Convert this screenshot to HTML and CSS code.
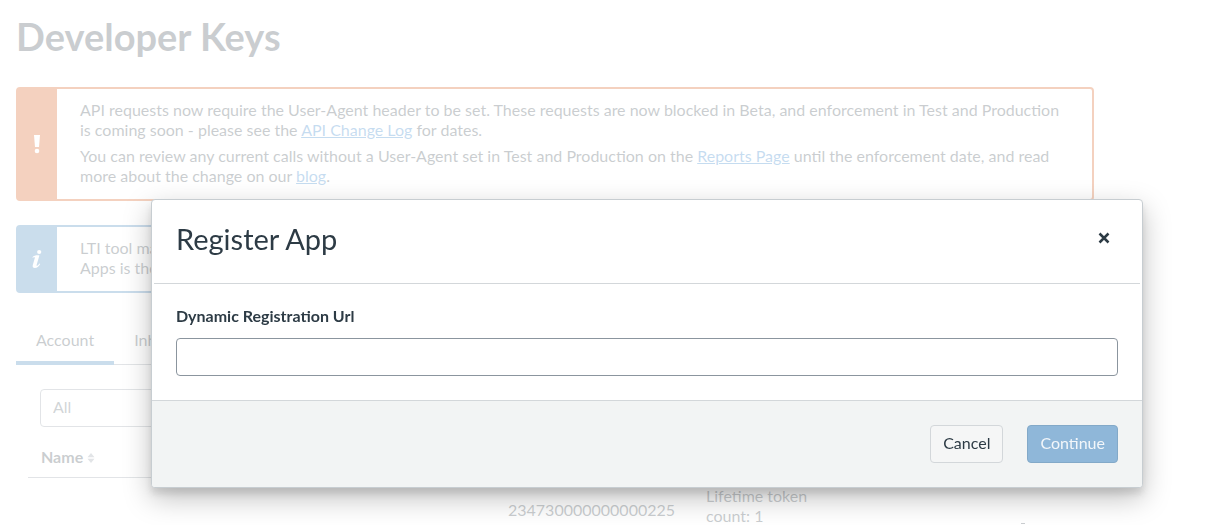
FILE: index.html
```html
<!DOCTYPE html>
<html lang="en">
<head>
    <meta charset="UTF-8">
    <meta name="viewport" content="width=device-width, initial-scale=1.0">
    <title>Developer Keys</title>
    <link rel="stylesheet" href="styles.css">
</head>
<body>
    <main class="page">
        <h1>Developer Keys</h1>

        <div class="alert alert-warning">
            <div class="alert-icon">
                <svg width="8" height="20" viewBox="0 0 8 20"><path d="M1 1h6l-1 12H2z"/><circle cx="4" cy="17" r="2.3"/></svg>
            </div>
            <div class="alert-text">
                <p>API requests now require the User-Agent header to be set. These requests are now blocked in Beta, and enforcement in Test and Production is coming soon - please see the <a href="#changelog">API Change Log</a> for dates.</p>
                <p>You can review any current calls without a User-Agent set in Test and Production on the <a href="#reports">Reports Page</a> until the enforcement date, and read more about the change on our <a href="#blog">blog</a>.</p>
            </div>
        </div>

        <div class="alert alert-info">
            <div class="alert-icon">
                <svg width="12" height="20" viewBox="0 0 12 20"><circle cx="8.2" cy="3" r="2.1"/><path d="M1.4 8.2C3 6.6 5 6.2 8.4 6.4L5.6 16c-.2.9.3 1 .8.7.8-.5 1.400-1.300 2-2.200l.8.5C7.700 17.600 6 19 3.900 19 2 19 1.300 17.800 1.800 16l2.100-7.200c.2-.7-.9-.6-2-.1z"/></svg>
            </div>
            <div class="alert-text">
                <p>LTI tool management<br>Apps is the</p>
            </div>
        </div>

        <nav class="tabs">
            <a href="#account" class="tab active">Account</a>
            <a href="#inherited" class="tab">Inherited</a>
        </nav>

        <div class="panel">
            <select class="filter" aria-label="Filter keys">
                <option>All</option>
            </select>
            <table>
                <thead>
                    <tr>
                        <th class="col-name">Name
                            <svg class="sort" width="8" height="10" viewBox="0 0 8 10"><path d="M4 0l3.500 4.300h-7zM4 10L.5 5.700h7z"/></svg>
                        </th>
                        <th class="col-details"></th>
                        <th class="col-stats"></th>
                        <th></th>
                    </tr>
                </thead>
                <tbody>
                    <tr>
                        <td></td>
                        <td class="details">234730000000000225</td>
                        <td class="stats">Lifetime token<br>count: 1</td>
                        <td class="actions">
                            <button type="button" class="delete" aria-label="Delete key">
                                <svg width="16" height="16" viewBox="0 0 16 16"><path d="M6 .5h4M1 3.500h14M3 3.500l1 12h8l1-12"/></svg>
                            </button>
                        </td>
                    </tr>
                </tbody>
            </table>
        </div>
    </main>

    <div class="overlay">
        <form class="modal" role="dialog" aria-labelledby="modal-title">
            <header class="modal-header">
                <h2 id="modal-title">Register App</h2>
                <button type="button" class="close" aria-label="Close">
                    <svg width="12" height="12" viewBox="0 0 12 12"><path d="M1.500 1.500l9 9M10.500 1.500l-9 9"/></svg>
                </button>
            </header>
            <div class="modal-body">
                <label for="url">Dynamic Registration Url</label>
                <input type="text" id="url">
            </div>
            <footer class="modal-footer">
                <button type="button" class="btn">Cancel</button>
                <button type="submit" class="btn btn-primary" disabled>Continue</button>
            </footer>
        </form>
    </div>
</body>
</html>
```
FILE: styles.css
```css
* {
    box-sizing: border-box;
}
body {
    margin: 0;
    height: 100vh;
    overflow: hidden;
    background: #fff;
    color: #2d3b45;
    font-family: Lato, "Liberation Sans", sans-serif;
    font-size: 16px;
    line-height: 20px;
}
.page {
    max-width: 1110px;
    height: 100vh;
    overflow: hidden;
    padding: 13px 16px 0;
}
h1 {
    margin: 0 0 28px;
    font-size: 38px;
    line-height: 46px;
}
.alert {
    display: flex;
    margin-bottom: 24px;
    border: 2px solid #d34a00;
    border-radius: 4px;
}
.alert-icon {
    display: flex;
    align-items: center;
    justify-content: center;
    width: 39px;
    flex-shrink: 0;
    padding-right: 2px;
    background: #d34a00;
}
.alert-icon svg {
    fill: #fff;
}
.alert-text {
    padding: 11px 24px 13px 23px;
}
.alert-text p {
    margin: 0;
}
.alert-text p + p {
    margin-top: 6px;
}
.alert-info {
    border-color: #2f77b3;
}
.alert-info .alert-icon {
    background: #2f77b3;
}
a {
    color: #1a76c4;
}
.tabs {
    display: flex;
    border-bottom: 1px solid #8b959e;
}
.tab {
    padding: 13px 20px 11px;
    margin-bottom: -1px;
    border-bottom: 4px solid transparent;
    color: #2d3b45;
    text-decoration: none;
}
.tab.active {
    border-color: #2f77b3;
}
.panel {
    padding: 24px 12px 0;
}
.filter {
    display: block;
    width: 280px;
    height: 38px;
    margin-left: 12px;
    padding: 0 12px 2px;
    border: 1px solid #8b959e;
    border-radius: 4px;
    background: #fff;
    color: #4a5760;
    font: inherit;
    appearance: none;
}
table {
    width: 100%;
    margin-top: 12px;
    border-collapse: collapse;
    table-layout: fixed;
}
th {
    padding: 8px 13px 10px;
    border-bottom: 1px solid #8b959e;
    text-align: left;
}
td {
    padding: 8px 12px;
    vertical-align: top;
}
.col-name {
    width: 468px;
}
.col-details {
    width: 198px;
}
.col-stats {
    width: 160px;
}
.details {
    padding-top: 22px;
}
.actions {
    padding: 45px 51px 0 0;
    text-align: right;
}
.delete {
    padding: 0;
    border: none;
    background: none;
}
.delete svg {
    display: block;
    fill: none;
    stroke: #2d3b45;
}
.sort {
    fill: #8b959e;
}
.overlay {
    position: fixed;
    inset: 0;
    padding: 199px 74px 0 151px;
    background: rgba(255, 255, 255, 0.75);
}
.modal {
    max-width: 992px;
    border: 1px solid #c7cdd1;
    border-radius: 4px;
    overflow: hidden;
    background: #fff;
    box-shadow: 0 6px 7px rgba(0, 0, 0, 0.1), 0 10px 28px rgba(0, 0, 0, 0.25);
}
.modal-header {
    display: flex;
    align-items: center;
    justify-content: space-between;
    margin: 0 2px;
    padding: 22px 22px 27px;
    border-bottom: 1px solid #d3d7da;
}
h2 {
    margin: 0;
    font-size: 29px;
    font-weight: 400;
    line-height: 34px;
}
.close {
    width: 28px;
    height: 28px;
    padding: 0;
    border: none;
    background: none;
    cursor: pointer;
}
.close svg {
    stroke: #2d3b45;
    stroke-width: 2.5;
}
.modal-body {
    padding: 22px 24px 24px;
}
label {
    display: block;
    margin-bottom: 12px;
    font-weight: bold;
}
input {
    display: block;
    width: 100%;
    height: 38px;
    padding: 0 12px;
    border: 1px solid #8b959e;
    border-radius: 4px;
    font: inherit;
}
.modal-footer {
    display: flex;
    justify-content: flex-end;
    gap: 24px;
    padding: 24px;
    border-top: 1px solid #d3d7da;
    background: #f2f4f4;
}
.btn {
    height: 38px;
    padding: 0 12px 2px;
    border: 1px solid #d3d7da;
    border-radius: 4px;
    background: #f5f6f6;
    color: #2d3b45;
    font: inherit;
    cursor: pointer;
}
.btn-primary {
    border-color: #83a9c8;
    background: #8fb7d9;
    color: #f2f6fa;
    cursor: not-allowed;
}
```
